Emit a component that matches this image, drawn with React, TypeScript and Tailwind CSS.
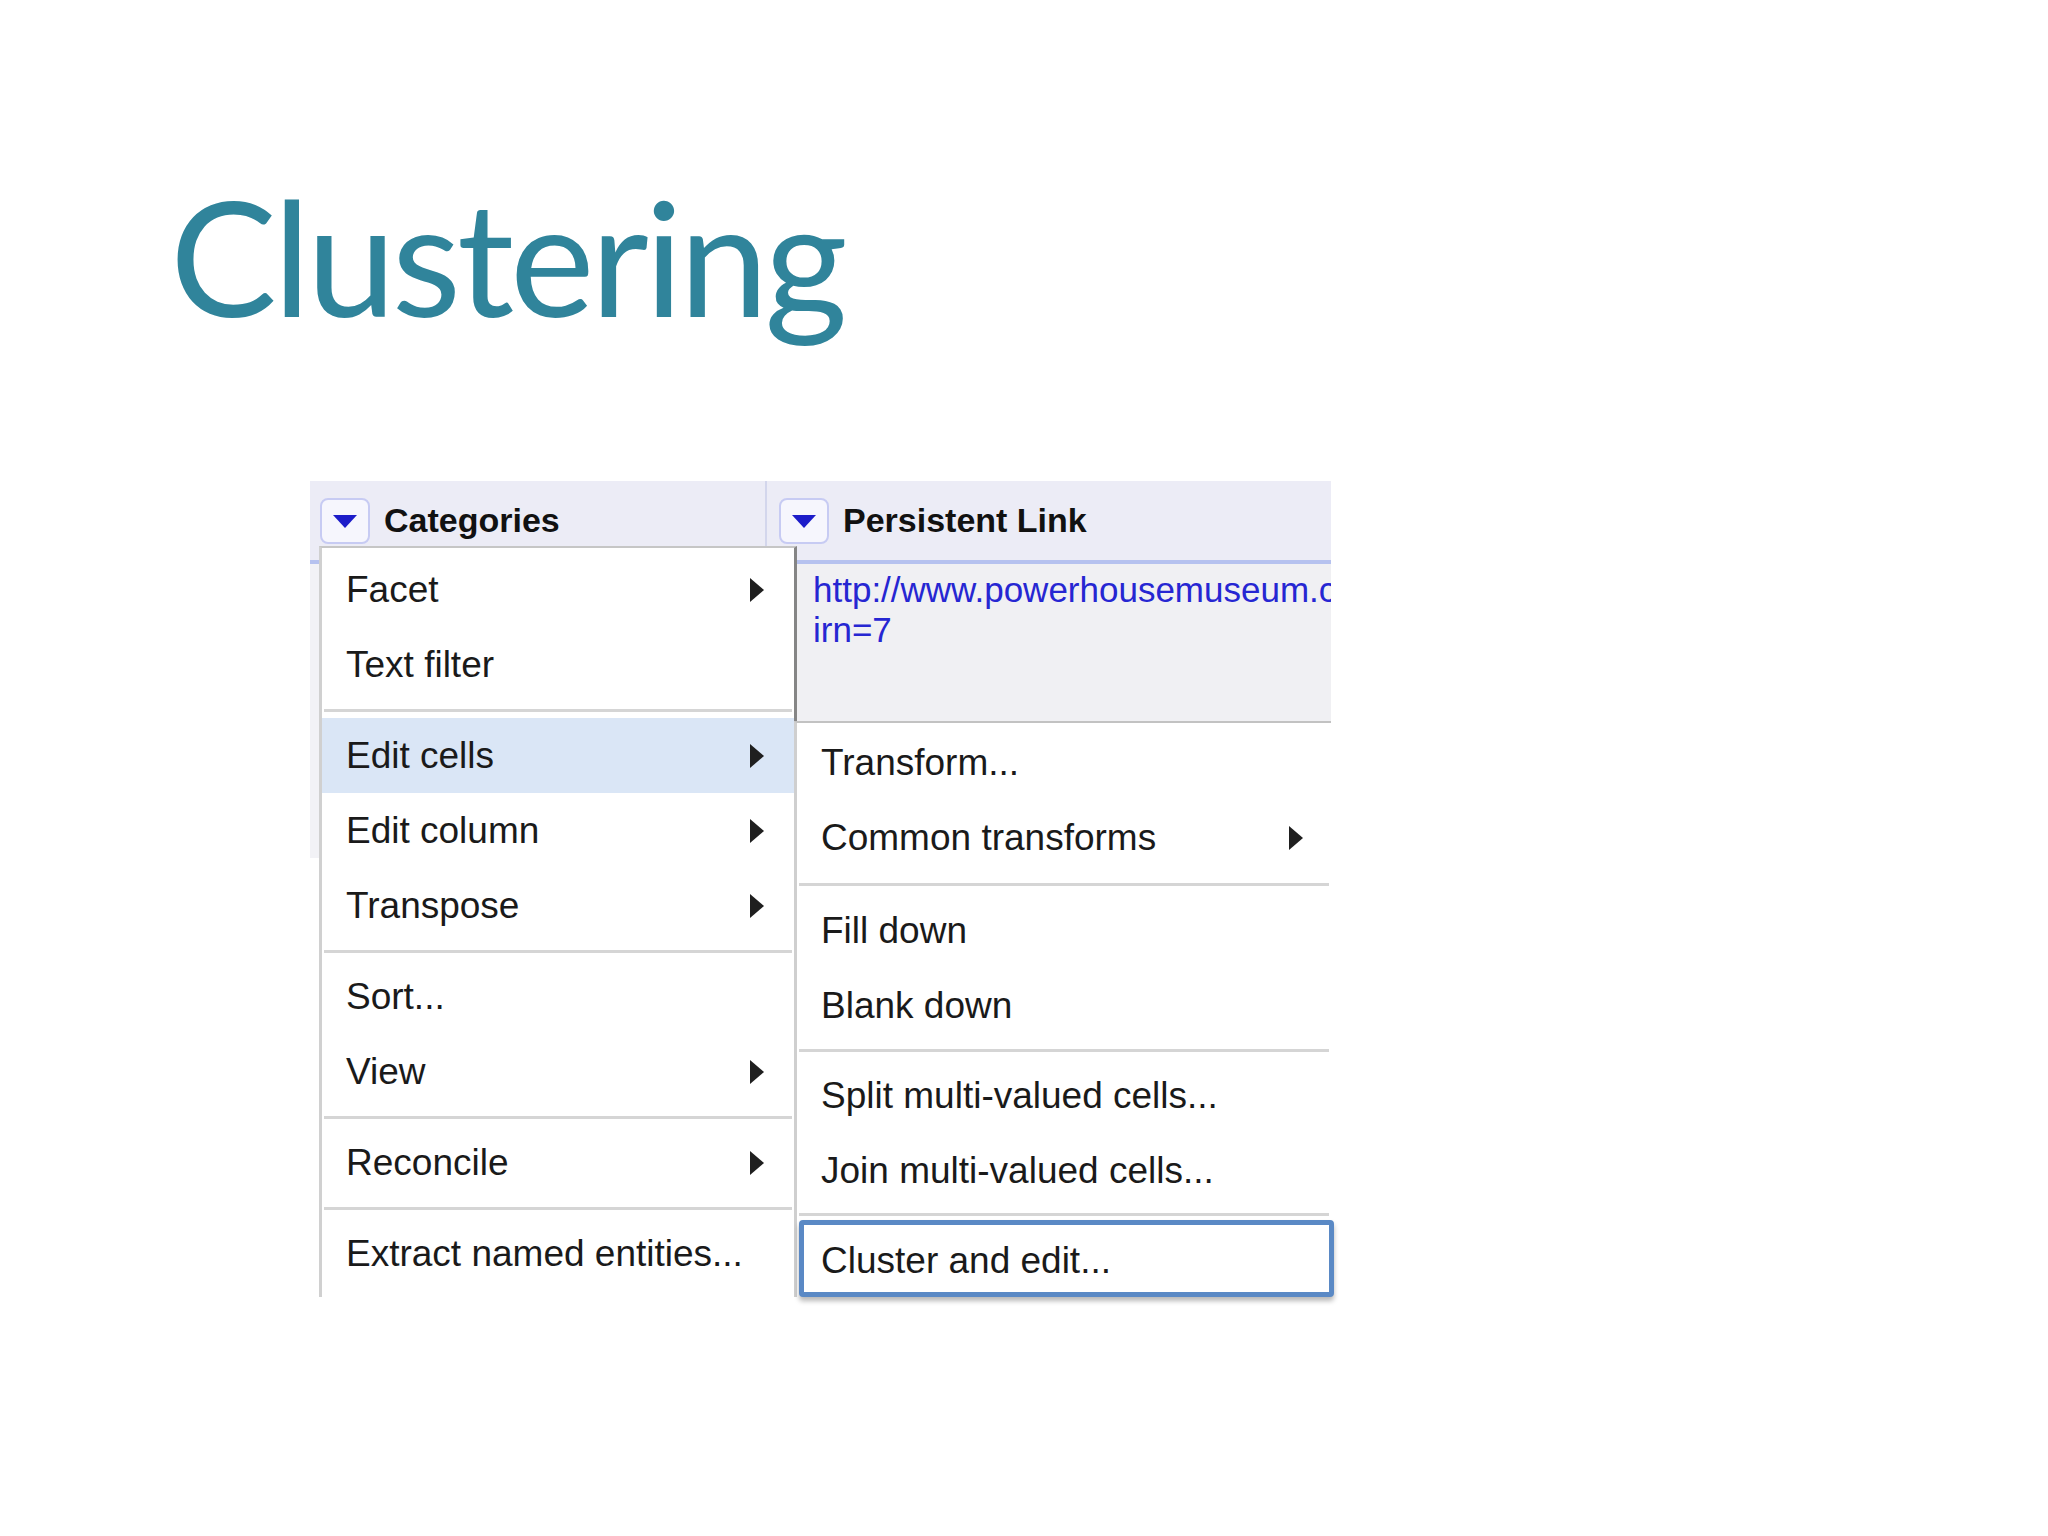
import React from "react";

function Arrow() {
  return <div className="w-0 h-0 border-y-[12px] border-y-transparent border-l-[14px] border-l-[#1f1f1f]" />;
}

function DropBtn() {
  return (
    <div className="w-[50px] h-[46px] rounded-[8px] border-2 border-[#c7cbf3] bg-[#f6f6fd] flex items-center justify-center">
      <div className="w-0 h-0 border-x-[12px] border-x-transparent border-t-[13px] border-t-[#1c1cc9] mt-[2px]" />
    </div>
  );
}

function Item({ label, arrow, active, pr }: { label: string; arrow?: boolean; active?: boolean; pr: string }) {
  return (
    <div className={`h-[75px] flex items-center justify-between pl-[24px] ${pr} ${active ? "bg-[#dae6f6]" : ""}`}>
      <span>{label}</span>
      {arrow ? <Arrow /> : null}
    </div>
  );
}

function Sep({ h }: { h: string }) {
  return (
    <div className={`${h} flex items-center px-[2px]`}>
      <div className="h-[3px] w-full bg-[#d5d5d5]" />
    </div>
  );
}

export default function App() {
  return (
    <div className="w-[2048px] h-[1536px] bg-white overflow-hidden">
      <h1 className="pl-[170px] pt-[175px] text-[160px] leading-none text-[#30849b] font-['Lato',sans-serif] tracking-[-0.025em]">
        Clustering
      </h1>
      <div className="relative ml-[310px] mt-[146px] w-[1021px] h-[816px] font-['Liberation_Sans',Arial,sans-serif]">
        {/* table header */}
        <div className="flex h-[79px] bg-[#ececf6]">
          <div className="w-[457px] border-r-2 border-[#d3d6ec] flex items-center pl-[10px] gap-[14px]">
            <DropBtn />
            <span className="text-[34px] font-bold text-[#111]">Categories</span>
          </div>
          <div className="flex-1 flex items-center pl-[12px] gap-[14px]">
            <DropBtn />
            <span className="text-[34px] font-bold text-[#111]">Persistent Link</span>
          </div>
        </div>
        <div className="h-[4px] bg-[#b6c2ef]" />
        {/* table body */}
        <div className="flex items-start">
          <div className="w-[457px] h-[294px] bg-[#f2f2f6]" />
          <div className="flex-1 h-[157px] bg-[#f0f0f3] pl-[46px] pt-[6px] overflow-hidden text-[35px] leading-[40px] text-[#2626d2] whitespace-nowrap">
            <div>http://www.powerhousemuseum.com/collection/database/?</div>
            <div>irn=7</div>
          </div>
        </div>

        {/* main menu */}
        <div className="absolute left-[9px] top-[65px] w-[478px] bottom-0 bg-white border-l-[3px] border-l-[#d0d0d0] border-t-2 border-t-[#c6c6c6] border-r-[3px] border-r-[#858585] pt-[4px] text-[37px] text-[#1a1a1a]">
          <Item label="Facet" arrow pr="pr-[30px]" />
          <Item label="Text filter" pr="pr-[30px]" />
          <Sep h="h-[16px]" />
          <Item label="Edit cells" arrow active pr="pr-[30px]" />
          <Item label="Edit column" arrow pr="pr-[30px]" />
          <Item label="Transpose" arrow pr="pr-[30px]" />
          <Sep h="h-[16px]" />
          <Item label="Sort..." pr="pr-[30px]" />
          <Item label="View" arrow pr="pr-[30px]" />
          <Sep h="h-[16px]" />
          <Item label="Reconcile" arrow pr="pr-[30px]" />
          <Sep h="h-[16px]" />
          <Item label="Extract named entities..." pr="pr-[30px]" />
        </div>

        {/* submenu */}
        <div className="absolute left-[484px] top-[240px] right-0 bottom-0 bg-white border-l-[3px] border-l-[#cfcfcf] border-t-2 border-t-[#c2c2c2] pt-[2px] text-[37px] text-[#1a1a1a]">
          <Item label="Transform..." pr="pr-[28px]" />
          <Item label="Common transforms" arrow pr="pr-[28px]" />
          <Sep h="h-[18px]" />
          <Item label="Fill down" pr="pr-[28px]" />
          <Item label="Blank down" pr="pr-[28px]" />
          <Sep h="h-[15px]" />
          <Item label="Split multi-valued cells..." pr="pr-[28px]" />
          <Item label="Join multi-valued cells..." pr="pr-[28px]" />
          <Sep h="h-[12px]" />
          <div className="h-[77px] ml-[2px] -mr-[3px] border-[5px] border-[#5a89c5] rounded-[4px] flex items-center pl-[17px] pt-[4px] bg-white shadow-[0_4px_5px_rgba(0,0,0,0.28)]">
            Cluster and edit...
          </div>
        </div>
      </div>
    </div>
  );
}
